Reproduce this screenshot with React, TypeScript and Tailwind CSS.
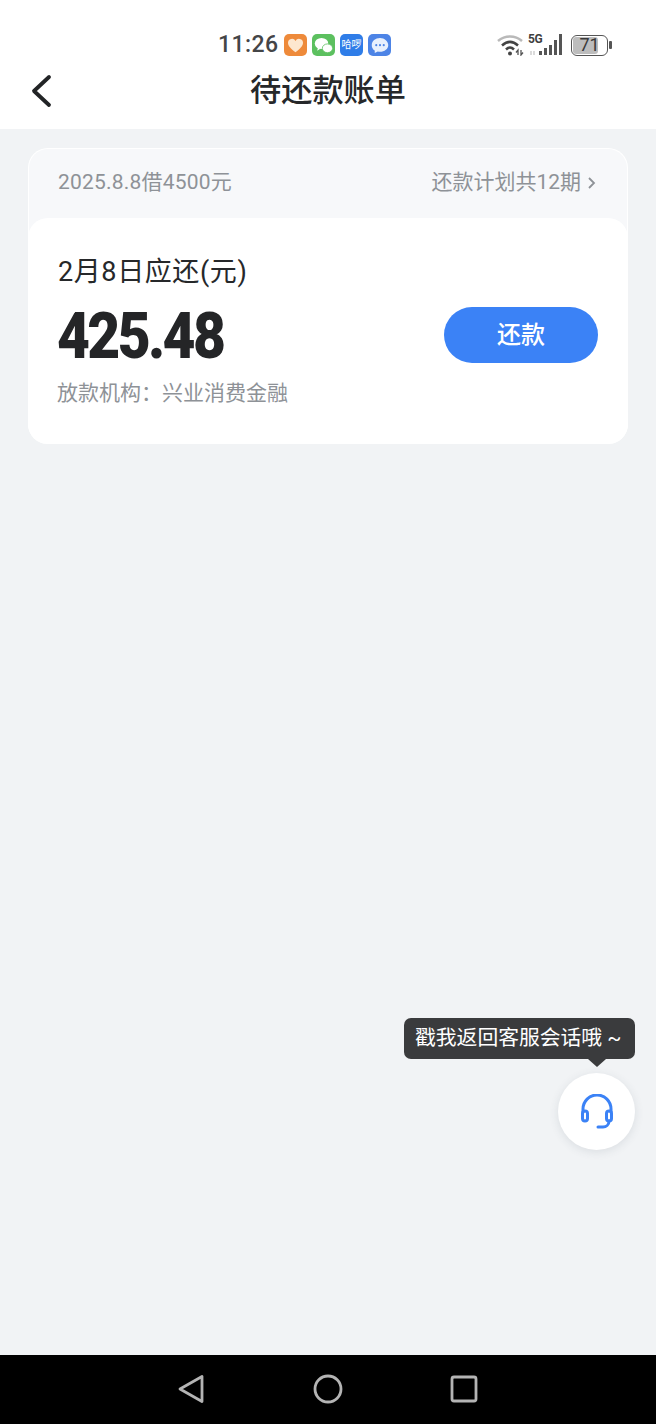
export default function App() {
  const font = { fontFamily: 'Roboto, "Noto Sans CJK SC", sans-serif' };
  return (
    <div style={font} className="relative w-[656px] h-[1424px] flex flex-col bg-[#f1f3f5] overflow-hidden">
      <header className="h-[129px] bg-white flex flex-col shrink-0">
        <div className="h-[60px] pt-[30px] flex items-start">
          <div className="ml-[218px] h-[30px] flex items-center">
            <span className="w-[66px] text-[23px] leading-[30px] font-medium tracking-[0.4px] text-[#444547]">11:26</span>
            <div className="flex gap-[5px]">
              <div className="w-[23px] h-[22px] rounded-[5px] bg-[#ee8a3a] flex items-center justify-center">
                <svg width="17" height="15" viewBox="0 0 24 22"><path d="M12 21C5 15.5 1 11.5 1 7a5.800 5.800 0 0 1 11-2.600A5.800 5.800 0 0 1 23 7c0 4.500-4 8.500-11 14z" fill="#fde7cf" /></svg>
              </div>
              <div className="w-[23px] h-[22px] rounded-[5px] bg-[#5cc05f] flex items-center justify-center">
                <svg width="19" height="17" viewBox="0 0 24 21" fill="#fff"><ellipse cx="9.500" cy="8" rx="8.500" ry="7" /><path d="M5 13l-1 4 4-2.500z" /><ellipse cx="17" cy="14" rx="6.500" ry="5.500" stroke="#5cc05f" strokeWidth="1" /></svg>
              </div>
              <div className="w-[23px] h-[22px] rounded-[5px] bg-[#2f7de8] flex items-center justify-center overflow-hidden">
                <span className="text-[10px] leading-none text-white whitespace-nowrap">哈啰</span>
              </div>
              <div className="w-[23px] h-[22px] rounded-[5px] bg-[#4d84e6] flex items-center justify-center">
                <svg width="18" height="17" viewBox="0 0 24 22"><path d="M12 1C5.900 1 1 5.200 1 10.500c0 3 1.600 5.600 4 7.300V21l4-2c1 .2 2 .300 3 .300 6.100 0 11-4.100 11-8.800S18.100 1 12 1z" fill="#e8f0fd" /><circle cx="7" cy="10.500" r="1.400" fill="#4d84e6" /><circle cx="12" cy="10.500" r="1.400" fill="#4d84e6" /><circle cx="17" cy="10.500" r="1.400" fill="#4d84e6" /></svg>
              </div>
            </div>
          </div>
          <div className="ml-auto mr-[44px] h-[30px] flex items-center">
            <svg width="28" height="22" viewBox="0 0 28 22" fill="none">
              <path d="M1 7C8 1 18 1 25 7" stroke="#b9b9b9" strokeWidth="2.500" />
              <path d="M5 11.500C10.500 6.500 15.500 6.500 21 11.500" stroke="#444" strokeWidth="2.500" />
              <path d="M9 15.500C11.500 13 14.500 13 17 15.500" stroke="#444" strokeWidth="2.500" />
              <circle cx="13" cy="19.500" r="2" fill="#444" />
              <path d="M21 21v-5l-2 2.500M24 16v5l2-2.500" stroke="#555" strokeWidth="1.300" />
            </svg>
            <div className="relative ml-[3px] w-[34px] h-[22px]">
              <svg width="34" height="22" viewBox="0 0 34 22" fill="none">
                <path d="M3 17v4M6 21v-4" stroke="#c8c8c8" strokeWidth="1.300" />
                <rect x="11" y="17" width="3" height="4" fill="#555" />
                <rect x="16" y="14" width="3" height="7" fill="#555" />
                <rect x="21" y="11" width="3" height="10" fill="#555" />
                <rect x="26" y="6" width="3" height="15" fill="#555" />
                <rect x="31" y="0" width="3" height="21" fill="#555" />
              </svg>
              <span className="absolute left-0 top-[-1px] text-[12px] leading-[12px] font-bold tracking-[-0.3px] text-[#3f3f3f]">5G</span>
            </div>
            <div className="relative ml-[9px] w-[37px] h-[21px] rounded-[6px] border-[1.5px] border-[#555] flex items-center justify-center">
              <div className="absolute left-[1px] top-[1px] bottom-[1px] w-[25px] rounded-[3px] bg-[#bdbdbd]" />
              <span className="relative text-[18px] leading-none text-[#3a3a3a]">71</span>
            </div>
            <div className="ml-[1px] w-[3px] h-[8px] rounded-[1px] bg-[#555]" />
          </div>
        </div>
        <div className="relative h-[69px] pb-[8px] flex items-center justify-center">
          <svg className="absolute left-[30px] top-[14px]" width="24" height="34" viewBox="0 0 24 34" fill="none"><path d="M19 3L4 17l15 14" stroke="#222426" strokeWidth="3.800" strokeLinecap="round" strokeLinejoin="round" /></svg>
          <h1 className="text-[31.200px] leading-[40px] font-medium text-[#26282a]">待还款账单</h1>
        </div>
      </header>

      <main className="flex-1 px-[28px] pt-[19px]">
        <section className="rounded-[20px] bg-[#f7f8fa] border border-white border-b-0">
          <div className="h-[69px] pl-[29px] pr-[30px] pb-[1px] flex items-center justify-between text-[21px] text-[#8e9297]">
            <span className="tracking-[0.2px]">2025.8.8借4500元</span>
            <span className="flex items-center gap-[6px]">
              还款计划共12期
              <svg width="10" height="16" viewBox="0 0 10 16" fill="none"><path d="M2 3l5 5-5 5" stroke="#8e9297" strokeWidth="1.800" /></svg>
            </span>
          </div>
          <div className="h-[226px] -mx-px rounded-[20px] bg-white pl-[29px] pr-[30px] pt-[36px] flex items-start justify-between">
            <div className="flex flex-col">
              <div className="pl-[1px] text-[27px] leading-[36px] tracking-[0.6px] text-[#26282a]">2月8日应还(元)</div>
              <div className="mt-[13px] h-[68px] flex items-center">
                <span className="origin-left scale-x-[0.89] text-[64px] leading-[68px] font-black tracking-[-3px] text-[#242527]">425.48</span>
              </div>
              <div className="mt-[8px] text-[21px] leading-[28px] text-[#8e9297]">放款机构{"\uFF1A"}兴业消费金融</div>
            </div>
            <button className="mt-[53px] w-[154px] h-[56px] rounded-full bg-[#3b82f6] text-white text-[24px] font-medium">还款</button>
          </div>
        </section>
      </main>

      <nav className="h-[69px] bg-black flex items-center shrink-0 text-[#b4b4b4]">
        <div className="px-[178px] w-full flex items-center justify-between pb-[1px]">
          <svg width="28" height="30" viewBox="0 0 28 30" fill="none"><path d="M24 2.500v25L2 15z" stroke="currentColor" strokeWidth="2.800" strokeLinejoin="round" /></svg>
          <svg width="30" height="30" viewBox="0 0 30 30" fill="none"><circle cx="15" cy="15" r="13" stroke="currentColor" strokeWidth="2.800" /></svg>
          <svg width="28" height="28" viewBox="0 0 28 28" fill="none"><rect x="2" y="2" width="24" height="24" rx="2" stroke="currentColor" strokeWidth="2.800" /></svg>
        </div>
      </nav>

      <div className="absolute left-[404px] top-[1018px] w-[231px] h-[41px] rounded-[7px] bg-[#3a3b3d] flex items-center pl-[11px] text-[20.800px] leading-none text-white whitespace-nowrap">
        戳我返回客服会话哦 ~
        <div className="absolute left-[184px] top-[41px] w-0 h-0 border-x-[9px] border-x-transparent border-t-[8px] border-t-[#3a3b3d]" />
      </div>
      <div className="absolute left-[558px] top-[1073px] w-[77px] h-[77px] rounded-full bg-white shadow-[0_2px_10px_rgba(60,70,90,0.12)] flex items-center justify-center">
        <svg width="34" height="36" viewBox="0 0 34 36" fill="none" stroke="#3b82f6" strokeWidth="3" strokeLinecap="round">
          <path d="M3 18V15a14 14 0 0 1 28 0v3" />
          <rect x="2.500" y="17" width="5" height="10" rx="2.500" />
          <rect x="26.500" y="17" width="5" height="10" rx="2.500" />
          <path d="M29 27c0 4-3 6-6 6h-5" />
        </svg>
      </div>
    </div>
  );
}
